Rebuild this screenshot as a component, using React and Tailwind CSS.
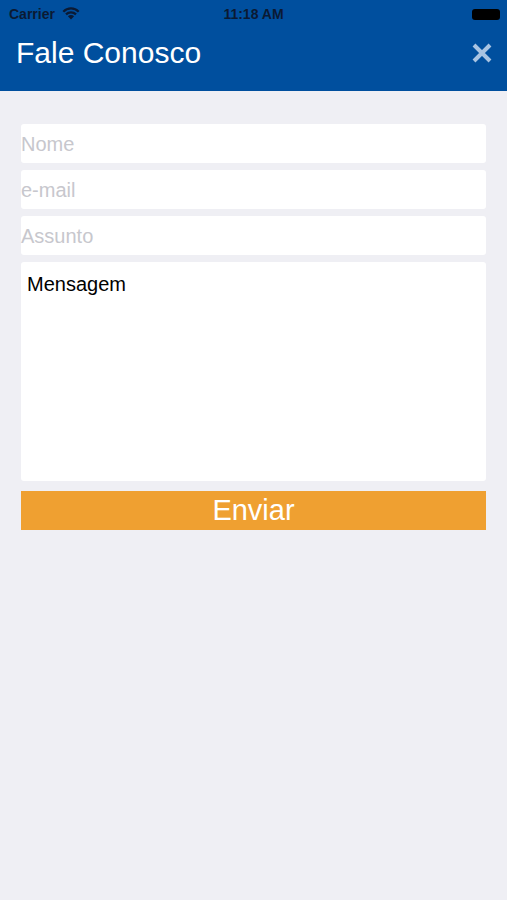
import React from "react";

export default function App() {
  const font = { fontFamily: '"Liberation Sans", Arial, sans-serif' };
  return (
    <div className="w-[507px] h-[900px] bg-[#efeff4] flex flex-col" style={font}>
      <div className="bg-[#004f9e] h-[91px] flex flex-col">
        <div className="h-[28px] relative flex items-center pl-[9px] pr-[7px]">
          <span className="text-[14px] font-bold text-[#0b1a33] leading-none">Carrier</span>
          <svg className="ml-[7px] mt-[-2px]" width="18" height="14" viewBox="0 0 18 14">
            <path d="M9 13.5 L5.9 10.3 A4.4 4.4 0 0 1 12.1 10.3 Z" fill="#0b1a33" />
            <path d="M3.2 7.6 A8.2 8.2 0 0 1 14.8 7.6 L13.2 9.2 A5.9 5.9 0 0 0 4.8 9.2 Z" fill="#0b1a33" />
            <path d="M0.5 4.9 A12 12 0 0 1 17.5 4.9 L15.9 6.5 A9.7 9.7 0 0 0 2.1 6.5 Z" fill="#0b1a33" />
          </svg>
          <span className="absolute left-0 right-0 text-center text-[14px] font-bold text-[#0b1a33] leading-none pointer-events-none">11:18 AM</span>
          <div className="ml-auto w-[28px] h-[11px] rounded-[3px] bg-black" />
        </div>
        <div className="flex-1 flex items-center justify-between pl-[16px] pr-[14px] pb-[13px]">
          <span className="text-white text-[30px] leading-none">Fale Conosco</span>
          <svg width="22" height="22" viewBox="0 0 22 22">
            <path d="M3 3 L19 19 M19 3 L3 19" stroke="#a9c4e2" strokeWidth="4" strokeLinecap="butt" />
          </svg>
        </div>
      </div>
      <div className="flex flex-col px-[21px] pt-[33px]">
        <div className="h-[39px] bg-white rounded-[3px] flex items-center">
          <span className="text-[20px] text-[#c7c7cd] leading-none">Nome</span>
        </div>
        <div className="h-[39px] mt-[7px] bg-white rounded-[3px] flex items-center">
          <span className="text-[20px] text-[#c7c7cd] leading-none">e-mail</span>
        </div>
        <div className="h-[39px] mt-[7px] bg-white rounded-[3px] flex items-center">
          <span className="text-[20px] text-[#c7c7cd] leading-none">Assunto</span>
        </div>
        <div className="h-[219px] mt-[7px] bg-white rounded-[3px] px-[6px] pt-[12px]">
          <span className="text-[20px] text-black leading-none">Mensagem</span>
        </div>
        <div className="h-[39px] mt-[10px] bg-[#efa031] flex items-center justify-center">
          <span className="text-[29px] text-white leading-none">Enviar</span>
        </div>
      </div>
    </div>
  );
}
